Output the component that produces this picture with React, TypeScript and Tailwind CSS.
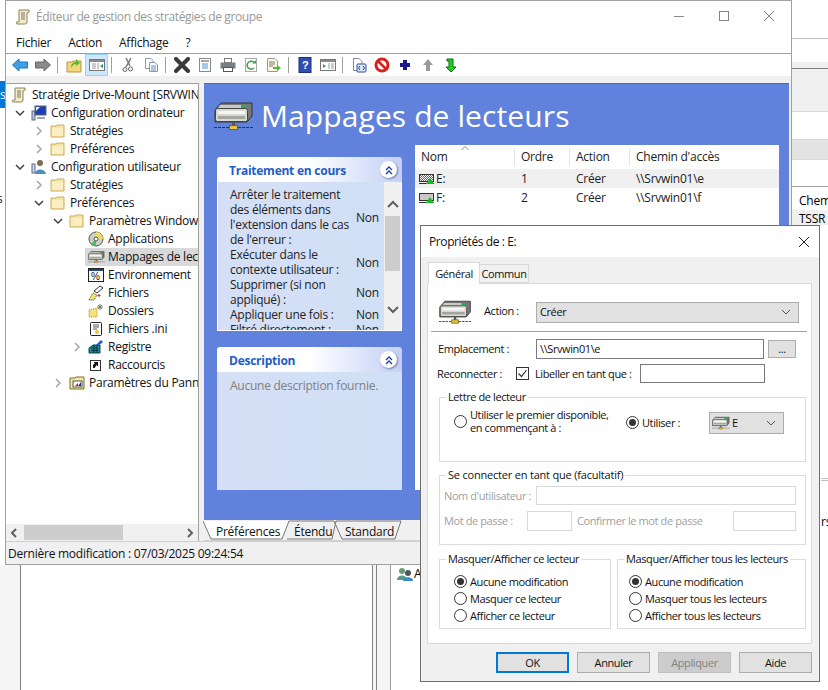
import type { ReactNode } from 'react'

const base = "font-['Open_Sans',sans-serif] text-[12px] tracking-[-0.25px] leading-[18px]"
const dialogBase = "font-['Open_Sans',sans-serif] text-[11px] tracking-[-0.4px] leading-[18px]"

function DriveIcon({ className = 'w-4 h-4' }: { className?: string }) {
  return (
    <svg viewBox="0 0 40 28" className={className}>
      <path d="M1 8 L7 1 H38 V14 L33 20 H1 Z" fill="#777" stroke="#333" />
      <path d="M6 3 H32 L29 6 H4 Z" fill="#c8c8c4" />
      <rect x="1.500" y="6.500" width="32" height="13" rx="2" fill="#d8d8d2" stroke="#444" />
      <rect x="4" y="9" width="27" height="3" fill="#f6f6f6" />
      <rect x="4" y="14" width="27" height="3" fill="#a5a5a0" />
      <rect x="27" y="3" width="5" height="3" fill="#18b848" />
      <rect x="18" y="20" width="3" height="4" fill="#555" />
      <rect x="15.500" y="23.500" width="8" height="4" fill="#e8c53f" stroke="#7a6310" />
      <path d="M0 25.500 H15 M24 25.500 H40" stroke="#333" strokeDasharray="3 1" />
    </svg>
  )
}

function Folder() {
  return (
    <svg viewBox="0 0 16 16" className="h-4 w-4 shrink-0">
      <path d="M1 3 H6 L7 2 H14 V14 H1 Z" fill="#f7e3a1" stroke="#cfae5c" />
      <path d="M2 5 H13 V13 H2 Z" fill="#fbeec2" />
    </svg>
  )
}

function Scroll() {
  return (
    <svg viewBox="0 0 16 16" className="h-4 w-4 shrink-0">
      <path d="M4 1 H14 V3 L12 4 V13 C12 15 10 15 9 15 H2 C1 15 1 13 2 13 H4 Z" fill="#f5ecc8" stroke="#8c8156" />
      <path d="M6 4 H10 M6 6 H10 M6 8 H10 M6 10 H10" stroke="#777" />
    </svg>
  )
}

function Monitor() {
  return (
    <svg viewBox="0 0 16 16" className="h-4 w-4 shrink-0">
      <rect x="1" y="6" width="3" height="9" fill="#b8c4d8" stroke="#5a6a8a" />
      <rect x="4" y="1" width="11" height="9" fill="#1c3fb8" stroke="#666" />
      <path d="M5 2 H9 L5 6 Z" fill="#e8f0ff" />
      <path d="M6 12 H14 V14 H6 Z" fill="#9aa4b4" />
    </svg>
  )
}

function UserIcon() {
  return (
    <svg viewBox="0 0 16 16" className="h-4 w-4 shrink-0">
      <rect x="1" y="5" width="3" height="9" fill="#cfd8e8" stroke="#5a6a8a" />
      <circle cx="9" cy="4" r="3" fill="#7b6a55" />
      <path d="M4 15 C4 9 14 9 15 15 Z" fill="#4b8fb8" />
    </svg>
  )
}

function CdIcon() {
  return (
    <svg viewBox="0 0 16 16" className="h-4 w-4 shrink-0">
      <circle cx="8" cy="8" r="7" fill="#c9d2c4" stroke="#555" />
      <path d="M8 8 L8 1 A7 7 0 0 1 15 8 Z" fill="#e8df6a" />
      <path d="M8 8 L3 13 A7 7 0 0 0 8 15 Z" fill="#55b85a" />
      <circle cx="8" cy="8" r="2" fill="#fff" stroke="#555" />
    </svg>
  )
}

function EnvIcon() {
  return (
    <svg viewBox="0 0 16 16" className="h-4 w-4 shrink-0">
      <rect x="0.500" y="1.500" width="15" height="13" fill="#fff" stroke="#222" />
      <rect x="1" y="2" width="14" height="2" fill="#1f3f8f" />
      <text x="3" y="13" fontSize="10" fontFamily="Liberation Sans" fill="#111">%</text>
    </svg>
  )
}

function FilesIcon() {
  return (
    <svg viewBox="0 0 16 16" className="h-4 w-4 shrink-0">
      <path d="M1 15 L5 8 L9 10 L6 15 Z" fill="#f3ea6b" stroke="#333" strokeDasharray="1 1" />
      <path d="M6 6 L12 1 L15 3 L9 8 Z" fill="#fff" stroke="#333" />
      <path d="M11 9 V12 M9.500 10.500 H12.500" stroke="#d22" />
    </svg>
  )
}

function NewFolder() {
  return (
    <svg viewBox="0 0 16 16" className="h-4 w-4 shrink-0">
      <path d="M1 7 L9 5 V14 H1 Z" fill="#f3e27a" stroke="#a58b2a" strokeDasharray="1 1" />
      <path d="M12 1 V7 M9 4 H15 M10 2 L14 6 M14 2 L10 6" stroke="#777" />
    </svg>
  )
}

function IniIcon() {
  return (
    <svg viewBox="0 0 16 16" className="h-4 w-4 shrink-0">
      <rect x="2.500" y="1.500" width="11" height="13" rx="1" fill="#fff" stroke="#222" />
      <path d="M5 4 H11 M5 6 H11 M5 8 H9" stroke="#555" />
      <circle cx="9" cy="11" r="2" fill="#e2c53b" />
    </svg>
  )
}

function RegistryIcon() {
  return (
    <svg viewBox="0 0 16 16" className="h-4 w-4 shrink-0">
      <path d="M1 9 L5 6 H12 V14 H1 Z" fill="#1d8f8f" stroke="#103f4f" />
      <path d="M3 9 H10 M3 11.500 H10 M6 6 V14 M9 6 V14" stroke="#0b2f3f" />
      <path d="M8 6 L13 1 L15 3 L10 7 Z" fill="#1f55c8" />
    </svg>
  )
}

function ShortcutIcon() {
  return (
    <svg viewBox="0 0 16 16" className="h-4 w-4 shrink-0">
      <rect x="2.500" y="3.500" width="10" height="10" fill="#fff" stroke="#333" />
      <path d="M5 11 V8 L7 6 H6 V5 H10 V9 H9 V7.500 L6.500 11 Z" fill="#111" />
    </svg>
  )
}

function PanelIcon() {
  return (
    <svg viewBox="0 0 16 16" className="h-4 w-4 shrink-0">
      <path d="M1 3 H6 L7 2 H15 V14 H1 Z" fill="#f3e9a8" stroke="#7a6a2a" />
      <rect x="4" y="6" width="9" height="6" fill="#fff" stroke="#555" />
      <path d="M6 11 L9 8 V11 Z" fill="#c22" />
      <path d="M9 11 L12 7 V11 Z" fill="#238" />
    </svg>
  )
}

function Chevron({ open }: { open?: boolean }) {
  return (
    <svg viewBox="0 0 10 10" className="h-[10px] w-[10px] shrink-0">
      {open ? (
        <path d="M1 3 L5 7 L9 3" fill="none" stroke="#404040" strokeWidth="1.500" />
      ) : (
        <path d="M3 1 L7 5 L3 9" fill="none" stroke="#a6a6a6" strokeWidth="1.500" />
      )}
    </svg>
  )
}

type TreeRowProps = {
  pad: string
  icon: ReactNode
  label: string
  chevron?: 'open' | 'closed'
  selected?: boolean
}

function TreeRow({ pad, icon, label, chevron, selected }: TreeRowProps) {
  return (
    <div className={`flex h-[18px] items-center whitespace-nowrap ${pad}`}>
      <div className="flex w-[16px] shrink-0 items-center">
        {chevron && <Chevron open={chevron === 'open'} />}
      </div>
      <div className={`flex h-[18px] flex-1 items-center ${selected ? '-ml-[3px] bg-[#d9d9d9] pl-[3px]' : ''}`}>
        <div className="flex w-[16px] shrink-0 justify-center">{icon}</div>
        <span className="pl-[4px]">{label}</span>
      </div>
    </div>
  )
}

function Tree() {
  return (
    <div className="flex-1 overflow-hidden pt-[1px] text-[#111]">
      <div className="flex h-[19px] items-center whitespace-nowrap pl-[5px]">
        <Scroll />
        <span className="pl-[5px]">Stratégie Drive-Mount [SRVWIN01]</span>
      </div>
      <TreeRow pad="pl-[9px]" chevron="open" icon={<Monitor />} label="Configuration ordinateur" />
      <TreeRow pad="pl-[28px]" chevron="closed" icon={<Folder />} label="Stratégies" />
      <TreeRow pad="pl-[28px]" chevron="closed" icon={<Folder />} label="Préférences" />
      <TreeRow pad="pl-[9px]" chevron="open" icon={<UserIcon />} label="Configuration utilisateur" />
      <TreeRow pad="pl-[28px]" chevron="closed" icon={<Folder />} label="Stratégies" />
      <TreeRow pad="pl-[28px]" chevron="open" icon={<Folder />} label="Préférences" />
      <TreeRow pad="pl-[47px]" chevron="open" icon={<Folder />} label="Paramètres Windows" />
      <TreeRow pad="pl-[66px]" icon={<CdIcon />} label="Applications" />
      <TreeRow pad="pl-[66px]" icon={<DriveIcon className="h-[14px] w-[17px] shrink-0" />} label="Mappages de lecteurs" selected />
      <TreeRow pad="pl-[66px]" icon={<EnvIcon />} label="Environnement" />
      <TreeRow pad="pl-[66px]" icon={<FilesIcon />} label="Fichiers" />
      <TreeRow pad="pl-[66px]" icon={<NewFolder />} label="Dossiers" />
      <TreeRow pad="pl-[66px]" icon={<IniIcon />} label="Fichiers .ini" />
      <TreeRow pad="pl-[66px]" chevron="closed" icon={<RegistryIcon />} label="Registre" />
      <TreeRow pad="pl-[66px]" icon={<ShortcutIcon />} label="Raccourcis" />
      <TreeRow pad="pl-[47px]" chevron="closed" icon={<PanelIcon />} label="Paramètres du Panneau" />
    </div>
  )
}

function Tool({ children, active }: { children: ReactNode; active?: boolean }) {
  return (
    <div className={`flex h-[22px] w-[23px] shrink-0 items-center justify-center ${active ? 'border border-[#99d1ff] bg-[#cce8ff]' : ''}`}>
      {children}
    </div>
  )
}

function Sep() {
  return <div className="ml-[3px] mr-[4px] h-[16px] w-px shrink-0 bg-[#a0a0a0]" />
}

function Svg({ children }: { children: ReactNode }) {
  return <svg viewBox="0 0 16 16" className="h-4 w-4">{children}</svg>
}

function Toolbar() {
  return (
    <div className="flex h-[22px] items-center pl-[2px]">
      <Tool><Svg><path d="M0.500 8 L7 2 V5 H15.500 V11 H7 V14 Z" fill="#3fa0e8" stroke="#1f6fb8" /></Svg></Tool>
      <Tool><Svg><path d="M15.500 8 L9 2 V5 H0.500 V11 H9 V14 Z" fill="#8a8a8a" stroke="#666" /></Svg></Tool>
      <Sep />
      <Tool>
        <Svg>
          <path d="M1 5 H6 L7 4 H15 V15 H1 Z" fill="#f2d77c" stroke="#b8963a" />
          <path d="M5 11 C5 7 7 5 10 5 V2 L14 6 L10 9 V7 C8 7 7 8 5 11 Z" fill="#5cb82e" />
        </Svg>
      </Tool>
      <Tool active>
        <Svg>
          <rect x="0.500" y="2.500" width="15" height="11" fill="#fff" stroke="#777" />
          <rect x="1" y="3" width="14" height="2" fill="#8a8a8a" />
          <path d="M9 6 V12 M3 7 H7 M3 9 H7 M3 11 H7" stroke="#999" />
          <path d="M14 7 L11 9 L14 11 Z" fill="#2a9a6a" />
        </Svg>
      </Tool>
      <Sep />
      <Tool>
        <Svg>
          <path d="M11 1 L6 10 M6 1 L10 9" stroke="#777" strokeWidth="1.500" />
          <circle cx="5" cy="12.500" r="2" fill="none" stroke="#666" />
          <circle cx="10.500" cy="12" r="2" fill="none" stroke="#666" />
        </Svg>
      </Tool>
      <Tool>
        <Svg>
          <path d="M2.500 1.500 H8 L10 3.500 V11.500 H2.500 Z" fill="#fff" stroke="#8a97a8" />
          <path d="M6.500 5.500 H12 L14.500 8 V14.500 H6.500 Z" fill="#fff" stroke="#8a97a8" />
          <path d="M8 9 H13 M8 11 H13 M8 13 H13" stroke="#5a8fc8" />
        </Svg>
      </Tool>
      <Sep />
      <Tool><Svg><path d="M2 2 L14 14 M14 2 L2 14" stroke="#3a3a3a" strokeWidth="4" strokeLinecap="round" /></Svg></Tool>
      <Tool>
        <Svg>
          <rect x="2.500" y="1.500" width="11" height="13" fill="#fff" stroke="#8a8a8a" />
          <path d="M4 4 H12" stroke="#8a8a8a" strokeWidth="1.500" />
          <path d="M5 7 H11 M5 9 H11 M5 11 H11" stroke="#4a8fd8" />
        </Svg>
      </Tool>
      <Tool>
        <Svg>
          <rect x="4.500" y="1.500" width="7" height="4" fill="#fff" stroke="#777" />
          <rect x="0.500" y="5.500" width="15" height="6" fill="#7a8088" />
          <rect x="3.500" y="10.500" width="9" height="4" fill="#fff" stroke="#555" />
        </Svg>
      </Tool>
      <Tool>
        <Svg>
          <rect x="2.500" y="1.500" width="11" height="13" fill="#fff" stroke="#aaa" />
          <path d="M11.500 6 A4 4 0 1 0 11 11" fill="none" stroke="#3f9f3f" strokeWidth="1.500" />
          <path d="M9.500 6.500 H13 V3 Z" fill="#3f9f3f" />
        </Svg>
      </Tool>
      <Tool>
        <Svg>
          <path d="M1.500 1.500 H9 L11.500 4 V14.500 H1.500 Z" fill="#fdf8e0" stroke="#999" />
          <path d="M3 5 H9 M3 7 H9 M3 9 H7" stroke="#777" />
          <path d="M7 10 H11 V8 L15 11 L11 14 V12 H7 Z" fill="#4fb83f" />
        </Svg>
      </Tool>
      <Sep />
      <Tool>
        <Svg>
          <rect x="2" y="0.500" width="12" height="15" fill="#2f4fb0" stroke="#1f2f7f" />
          <text x="5" y="12" fontSize="11" fontWeight="bold" fontFamily="Liberation Sans" fill="#fff">?</text>
        </Svg>
      </Tool>
      <Tool>
        <Svg>
          <rect x="0.500" y="2.500" width="15" height="11" fill="#fff" stroke="#777" />
          <rect x="1" y="3" width="14" height="2" fill="#8a8a8a" />
          <path d="M9 6 V12 M11 7 H14 M11 9 H14 M11 11 H14" stroke="#999" />
          <path d="M3 7 L6 9 L3 11 Z" fill="#2a9a6a" />
        </Svg>
      </Tool>
      <Sep />
      <Tool>
        <Svg>
          <path d="M2.500 1.500 H8 L11 4.500 V13.500 H2.500 Z" fill="#fff" stroke="#7a8aa8" />
          <rect x="6" y="7" width="9" height="8" rx="1" fill="#dfe8f8" stroke="#2a4f9f" />
          <path d="M9 9 L7.500 11 L9 13 M12 9 L13.500 11 L12 13" fill="none" stroke="#1f3f8f" />
        </Svg>
      </Tool>
      <Tool>
        <Svg>
          <circle cx="8" cy="8" r="6" fill="#fff" stroke="#d8201f" strokeWidth="3" />
          <path d="M4 4 L12 12" stroke="#d8201f" strokeWidth="2.500" />
        </Svg>
      </Tool>
      <Tool><Svg><path d="M6 3 H10 V6 H13 V10 H10 V13 H6 V10 H3 V6 H6 Z" fill="#1a1a8c" /></Svg></Tool>
      <Tool><Svg><path d="M8 2 L13 8 H10 V14 H6 V8 H3 Z" fill="#9a9a9a" /></Svg></Tool>
      <Tool>
        <Svg>
          <path d="M4 2 H10 V10 H13 L8 15 L3 10 H6 V4 H4 Z" fill="#22d022" stroke="#0a6a0a" />
        </Svg>
      </Tool>
    </div>
  )
}

function CollapseBtn() {
  return (
    <div className="flex h-[17px] w-[17px] items-center justify-center rounded-full bg-white shadow-[1px_1px_2px_rgba(60,70,120,0.6)]">
      <svg viewBox="0 0 10 10" className="h-[10px] w-[10px]">
        <path d="M2 5 L5 2 L8 5 M2 9 L5 6 L8 9" fill="none" stroke="#1c3fa8" strokeWidth="1.300" />
      </svg>
    </div>
  )
}

function TaskHeader({ title }: { title: string }) {
  return (
    <div className="flex h-[25px] shrink-0 items-center justify-between rounded-t-[3px] bg-gradient-to-r from-white via-white to-[#c3d0f5] pl-[12px] pr-[5px]">
      <span className="pt-[2px] font-bold text-[#215dc6]">{title}</span>
      <CollapseBtn />
    </div>
  )
}

const processing: [string, string][] = [
  ["Arrêter le traitement des éléments dans l'extension dans le cas de l'erreur :", 'Non'],
  ['Exécuter dans le contexte utilisateur :', 'Non'],
  ['Supprimer (si non appliqué) :', 'Non'],
  ['Appliquer une fois :', 'Non'],
  ['Filtré directement :', 'Non'],
]

function TreatmentCard() {
  return (
    <div className="flex h-[174px] shrink-0 flex-col">
      <TaskHeader title="Traitement en cours" />
      <div className="flex min-h-0 flex-1 border-x border-b border-white">
        <div className="flex-1 overflow-hidden bg-gradient-to-r from-[#d6dff7] to-[#d0e0f5] pl-[12px] pt-[5px] text-[#222] leading-[15px]">
          {processing.map(([label, value]) => (
            <div key={label} className="flex items-center">
              <span className="w-[120px] shrink-0">{label}</span>
              <span className="pl-[6px]">{value}</span>
            </div>
          ))}
        </div>
        <div className="flex w-[17px] shrink-0 flex-col items-center bg-[#f0f0f0] pt-[18px]">
          <svg viewBox="0 0 12 8" className="h-[8px] w-[12px] shrink-0">
            <path d="M1 7 L6 2 L11 7" fill="none" stroke="#606060" strokeWidth="2" />
          </svg>
          <div className="mt-[8px] h-[55px] w-[15px] shrink-0 bg-[#cdcdcd]" />
          <svg viewBox="0 0 12 8" className="mt-[35px] h-[8px] w-[12px] shrink-0">
            <path d="M1 1 L6 6 L11 1" fill="none" stroke="#606060" strokeWidth="2" />
          </svg>
        </div>
      </div>
    </div>
  )
}

function DescriptionCard() {
  return (
    <div className="flex h-[143px] shrink-0 flex-col">
      <TaskHeader title="Description" />
      <div className="flex-1 bg-gradient-to-r from-[#d6dff7] to-[#d0e0f5] pl-[13px] pt-[5px] text-[#808080]">
        Aucune description fournie.
      </div>
    </div>
  )
}

function TableRow({ name, order, path, active }: { name: string; order: string; path: string; active?: boolean }) {
  const pid = `dither-${name[0]}`
  return (
    <div className={`flex h-[19px] items-center ${active ? 'bg-[#f0f0f0]' : ''}`}>
      <div className="flex w-[99px] items-center pl-[4px]">
        <svg viewBox="0 0 16 12" className="h-[12px] w-[16px]">
          <defs>
            <pattern id={pid} width="2" height="2" patternUnits="userSpaceOnUse">
              <rect width="2" height="2" fill="#2b6fd0" />
              <rect width="1" height="1" fill="#ffffff" />
              <rect x="1" y="1" width="1" height="1" fill="#ffffff" />
            </pattern>
          </defs>
          <rect x="0.500" y="1.500" width="14" height="7" fill={active ? `url(#${pid})` : '#c8c8c8'} stroke="#333" />
          <path d="M0 10.500 H15" stroke="#333" />
          <path d="M11 5 L15 11 H7 Z" fill="#10c020" />
        </svg>
        <span className="pl-[1px]">{name}</span>
      </div>
      <span className="w-[55px] pl-[7px]">{order}</span>
      <span className="w-[60px] pl-[7px]">Créer</span>
      <span className="pl-[7px]">{path}</span>
    </div>
  )
}

function DrivesTable() {
  return (
    <div className="relative w-[364px] shrink-0 bg-white text-[#222]">
      <svg viewBox="0 0 8 4" className="absolute left-[46px] top-[1px] h-[4px] w-[8px]">
        <path d="M0.500 4 L4 0.500 L7.500 4" fill="none" stroke="#888" />
      </svg>
      <div className="flex h-[24px] items-center">
        <span className="w-[100px] border-r border-[#e5e5e5] pl-[6px]">Nom</span>
        <span className="w-[55px] border-r border-[#e5e5e5] pl-[6px]">Ordre</span>
        <span className="w-[60px] border-r border-[#e5e5e5] pl-[6px]">Action</span>
        <span className="pl-[6px]">Chemin d'accès</span>
      </div>
      <TableRow name="E:" order="1" path="\\Srvwin01\e" active />
      <TableRow name="F:" order="2" path="\\Srvwin01\f" />
    </div>
  )
}

function BottomTabs() {
  return (
    <div className="relative flex h-[21px] items-center border-b border-[#d0d0d0] bg-[#f0f0f0] pt-[3px] text-[#111]">
      <svg viewBox="0 0 203 21" className="absolute -left-[1px] top-0 h-[21px] w-[203px]">
        <path d="M0 1 L8 19 H79 L86 1 Z" fill="#fff" />
        <path d="M0 1 L8 19 H79 L86 1 H131" fill="none" stroke="#777" />
        <path d="M84 19 H129 L133 1 H198 L192 19 H139 L131 1" fill="none" stroke="#777" />
      </svg>
      <span className="relative ml-[12px] w-[78px]">Préférences</span>
      <span className="relative w-[51px]">Étendu</span>
      <span className="relative">Standard</span>
    </div>
  )
}

function MainWindow() {
  return (
    <div className={`absolute left-[5px] top-0 flex h-[565px] w-[787px] flex-col border border-[#a0a0a0] bg-white ${base}`}>
      <div className="flex h-[31px] shrink-0 items-center pl-[9px]">
        <Scroll />
        <span className="pl-[5px] tracking-[-0.38px] text-[#999]">Éditeur de gestion des stratégies de groupe</span>
        <div className="ml-auto flex items-center gap-[35px] pb-[1px] pr-[17px]">
          <svg viewBox="0 0 10 10" className="h-[10px] w-[10px]"><path d="M0 5.500 H10" stroke="#888" /></svg>
          <svg viewBox="0 0 10 10" className="h-[10px] w-[10px]"><rect x="0.500" y="0.500" width="9" height="9" fill="none" stroke="#888" /></svg>
          <svg viewBox="0 0 10 10" className="h-[10px] w-[10px]"><path d="M0 0 L10 10 M10 0 L0 10" stroke="#888" /></svg>
        </div>
      </div>
      <div className="flex h-[22px] shrink-0 items-center gap-[17px] border-b border-[#a0a0a0] pl-[10px] text-[#111]">
        <span>Fichier</span>
        <span>Action</span>
        <span>Affichage</span>
        <span>?</span>
      </div>
      <Toolbar />
      <div className="h-[7px] shrink-0 bg-[#f0f0f0]" />
      <div className="flex min-h-0 flex-1">
        <div className="flex w-[193px] shrink-0 flex-col border-r border-t border-[#a0a0a0]">
          <Tree />
          <div className="flex h-[17px] shrink-0 items-center bg-[#f0f0f0] px-[4px]">
            <svg viewBox="0 0 8 10" className="h-[10px] w-[8px]"><path d="M6 1 L2 5 L6 9" fill="none" stroke="#606060" strokeWidth="2" /></svg>
            <div className="ml-[6px] h-[15px] w-[99px] bg-[#cdcdcd]" />
            <svg viewBox="0 0 8 10" className="ml-auto h-[10px] w-[8px]"><path d="M2 1 L6 5 L2 9" fill="none" stroke="#606060" strokeWidth="2" /></svg>
          </div>
        </div>
        <div className="flex min-w-0 flex-1 flex-col bg-[#f0f0f0] pl-[5px] pr-[2px]">
          <div className="flex-1 border-t border-[#696969] bg-[#6082dc] pl-[10px]">
            <div className="flex h-[61px] items-center gap-[7px] pt-[3px]">
              <DriveIcon className="h-[28px] w-[40px]" />
              <span className="text-[30px] leading-[36px] tracking-[0.1px] text-white">Mappages de lecteurs</span>
            </div>
            <div className="flex gap-[13px] pl-[3px]">
              <div className="flex w-[185px] shrink-0 flex-col gap-[16px] pt-[12px]">
                <TreatmentCard />
                <DescriptionCard />
              </div>
              <DrivesTable />
            </div>
          </div>
          <BottomTabs />
        </div>
      </div>
      <div className="flex h-[23px] shrink-0 items-center border-t border-[#d0d0d0] bg-[#f0f0f0] pl-[2px] pt-[1px] text-[#111]">
        Dernière modification : 07/03/2025 09:24:54
      </div>
    </div>
  )
}

function Radio({ checked, label }: { checked?: boolean; label: ReactNode }) {
  return (
    <div className="flex items-center gap-[3px]">
      <div className="flex h-[13px] w-[13px] shrink-0 items-center justify-center rounded-full border border-[#333] bg-white">
        {checked && <div className="h-[7px] w-[7px] rounded-full bg-[#333]" />}
      </div>
      <span className="leading-[13px] whitespace-nowrap">{label}</span>
    </div>
  )
}

function Group({ title, className, children }: { title: string; className: string; children: ReactNode }) {
  return (
    <fieldset className={`shrink-0 border border-[#dcdcdc] ${className}`}>
      <legend className="ml-[6px] px-[2px] leading-[12px] whitespace-nowrap">{title}</legend>
      {children}
    </fieldset>
  )
}

function DialogButton({ label, variant }: { label: string; variant?: 'default' | 'disabled' }) {
  const style =
    variant === 'default'
      ? 'border-2 border-[#0078d7] bg-[#e1e1e1] text-[#111]'
      : variant === 'disabled'
        ? 'border border-[#bfbfbf] bg-[#cccccc] text-[#838383]'
        : 'border border-[#adadad] bg-[#e1e1e1] text-[#111]'
  return <div className={`flex h-[21px] w-[73px] items-center justify-center ${style}`}>{label}</div>
}

function Dialog() {
  return (
    <div className={`absolute left-[420px] top-[225px] flex h-[457px] w-[400px] flex-col border border-[#6e6e6e] bg-[#f0f0f0] text-[#111] ${dialogBase}`}>
      <div className="flex h-[31px] shrink-0 items-center justify-between bg-white pl-[8px] pr-[10px]">
        <span className="text-[12px]">Propriétés de : E:</span>
        <svg viewBox="0 0 10 10" className="h-[10px] w-[10px]"><path d="M0 0 L10 10 M10 0 L0 10" stroke="#222" /></svg>
      </div>
      <div className="flex h-[26px] shrink-0 items-end pl-[7px]">
        <div className="relative z-10 -mb-px flex h-[22px] w-[52px] items-center justify-center border border-b-0 border-[#d9d9d9] bg-white">Général</div>
        <div className="flex h-[19px] w-[49px] items-center justify-center border border-l-0 border-[#d9d9d9]">Commun</div>
      </div>
      <div className="ml-[6px] flex h-[361px] w-[385px] shrink-0 flex-col border border-[#d9d9d9] bg-white pt-[12px]">
        <div className="flex h-[32px] shrink-0 items-center pl-[11px]">
          <DriveIcon className="h-[24px] w-[33px] shrink-0" />
          <span className="w-[64px] shrink-0 pb-[3px] pl-[12px]">Action :</span>
          <div className="flex h-[21px] w-[263px] items-center justify-between border border-[#adadad] bg-[#e1e1e1] pl-[3px] pr-[7px]">
            Créer
            <svg viewBox="0 0 10 6" className="h-[6px] w-[10px]"><path d="M1 1 L5 5 L9 1" fill="none" stroke="#555" /></svg>
          </div>
        </div>
        <div className="ml-[3px] mr-[4px] mt-[3px] h-px shrink-0 bg-[#a0a0a0]" />
        <div className="mt-[7px] flex h-[20px] shrink-0 items-center pl-[10px]">
          <span className="w-[98px] shrink-0">Emplacement :</span>
          <div className="flex h-[20px] w-[228px] items-center border border-[#7a7a7a] pl-[3px]">\\Srvwin01\e</div>
          <div className="ml-[4px] flex h-[18px] w-[28px] items-center justify-center border border-[#adadad] bg-[#e1e1e1]">...</div>
        </div>
        <div className="mt-[5px] flex h-[19px] shrink-0 items-center pl-[9px]">
          <span className="w-[79px] shrink-0">Reconnecter :</span>
          <div className="flex h-[13px] w-[13px] shrink-0 items-center justify-center border border-[#333]">
            <svg viewBox="0 0 11 11" className="h-[11px] w-[11px]"><path d="M1.500 5.500 L4.500 8.500 L9.500 2" fill="none" stroke="#333" strokeWidth="1.200" /></svg>
          </div>
          <span className="w-[111px] shrink-0 whitespace-nowrap pl-[6px]">Libeller en tant que :</span>
          <div className="h-[19px] w-[125px] shrink-0 border border-[#7a7a7a]" />
        </div>
        <Group title="Lettre de lecteur" className="ml-[11px] mr-[5px] mt-[8px] h-[71px]">
          <div className="flex items-center pl-[14px] pt-[5px]">
            <div className="w-[172px] shrink-0">
              <Radio label={<>Utiliser le premier disponible,<br />en commençant à :</>} />
            </div>
            <div className="w-[83px] shrink-0 pt-[3px]">
              <Radio checked label="Utiliser :" />
            </div>
            <div className="mt-[4px] flex h-[22px] w-[75px] shrink-0 items-center border border-[#adadad] bg-[#e1e1e1] pl-[2px] pr-[7px]">
              <DriveIcon className="h-[14px] w-[18px] shrink-0" />
              <span className="pl-[2px]">E</span>
              <svg viewBox="0 0 10 6" className="ml-auto h-[6px] w-[10px]"><path d="M1 1 L5 5 L9 1" fill="none" stroke="#555" /></svg>
            </div>
          </div>
        </Group>
        <Group title="Se connecter en tant que (facultatif)" className="ml-[11px] mr-[5px] mt-[7px] h-[76px] tracking-[-0.2px]">
          <div className="flex items-center pl-[4px] pt-[5px] tracking-[-0.4px] text-[#a0a0a0]">
            <span className="w-[92px] shrink-0 whitespace-nowrap">Nom d'utilisateur :</span>
            <div className="h-[19px] w-[260px] shrink-0 border border-[#d9d9d9]" />
          </div>
          <div className="flex items-center pl-[4px] pt-[6px] tracking-[-0.4px] text-[#a0a0a0]">
            <span className="w-[83px] shrink-0 whitespace-nowrap">Mot de passe :</span>
            <div className="h-[20px] w-[45px] shrink-0 border border-[#d9d9d9]" />
            <span className="w-[161px] shrink-0 whitespace-nowrap pl-[5px]">Confirmer le mot de passe</span>
            <div className="h-[20px] w-[63px] shrink-0 border border-[#d9d9d9]" />
          </div>
        </Group>
        <div className="ml-[11px] mr-[5px] mt-[8px] flex shrink-0 gap-[6px]">
          <Group title="Masquer/Afficher ce lecteur" className="h-[76px] w-[172px]">
            <div className="flex flex-col gap-[4px] pl-[14px] pt-[10px]">
              <Radio checked label="Aucune modification" />
              <Radio label="Masquer ce lecteur" />
              <Radio label="Afficher ce lecteur" />
            </div>
          </Group>
          <Group title="Masquer/Afficher tous les lecteurs" className="h-[76px] w-[189px]">
            <div className="flex flex-col gap-[4px] pl-[11px] pt-[10px]">
              <Radio checked label="Aucune modification" />
              <Radio label="Masquer tous les lecteurs" />
              <Radio label="Afficher tous les lecteurs" />
            </div>
          </Group>
        </div>
      </div>
      <div className="flex justify-end gap-[8px] pr-[7px] pt-[8px]">
        <DialogButton label="OK" variant="default" />
        <DialogButton label="Annuler" />
        <DialogButton label="Appliquer" variant="disabled" />
        <DialogButton label="Aide" />
      </div>
    </div>
  )
}

function Backdrop() {
  return (
    <>
      <div className={`absolute left-0 top-[81px] flex h-[27px] w-[5px] items-center overflow-hidden bg-[#0078d7] text-white ${base}`}>s</div>
      <div className={`absolute left-[-3px] top-[190px] text-[#222] ${base}`}>s</div>
      <div className="absolute left-0 top-[565px] h-[125px] w-[20px] bg-[#f5f5f5]" />
      <div className="absolute left-[20px] top-[565px] h-[125px] w-[353px] border-x border-[#808080] bg-white" />
      <div className="absolute left-[373px] top-[565px] h-[125px] w-[17px] bg-[#f5f5f5]" />
      <div className="absolute left-[376px] top-[565px] h-[125px] w-px bg-[#808080]" />
      <div className="absolute left-[390px] top-[565px] h-[125px] w-px bg-[#a0a0a0]" />
      <div className={`absolute left-[397px] top-[565px] flex h-[18px] items-center gap-[1px] ${base}`}>
        <svg viewBox="0 0 16 14" className="h-[14px] w-[16px]">
          <circle cx="5" cy="4" r="3" fill="#6a9a7a" />
          <path d="M0 13 C0 7 10 7 10 13 Z" fill="#5a9a8a" />
          <circle cx="11" cy="6" r="3" fill="#555" />
          <path d="M6 14 C6 9 16 9 16 14 Z" fill="#3a8ac8" />
        </svg>
        <span className="w-[6px] overflow-hidden">A</span>
      </div>
      {/* fenetre derriere, a droite */}
      <div className="absolute left-[792px] top-[38px] h-px w-[36px] bg-[#c0c0c0]" />
      <div className="absolute left-[792px] top-[62px] h-[6px] w-[36px] bg-[#f0f0f0]" />
      <div className="absolute left-[792px] top-[68px] h-[44px] w-[36px] border-t border-b border-t-[#808080] border-b-[#d9d9d9] bg-[#f0f0f0]" />
      <div className="absolute left-[792px] top-[139px] h-[21px] w-[36px] border-y border-[#d9d9d9] bg-[#e3e3e3]" />
      <div className={`absolute left-[792px] top-[186px] h-[39px] w-[36px] overflow-hidden border-t border-[#a0a0a0] pl-[7px] pt-[5px] ${base}`}>
        <div className="whitespace-nowrap">Chemin</div>
        <div className="-ml-[7px] whitespace-nowrap bg-[#f0f0f0] pl-[7px]">TSSR</div>
      </div>
      <div className="absolute left-[821px] top-[478px] h-[3px] w-[7px] border-y border-[#c0c0c0]" />
      <div className={`absolute left-[821px] top-[513px] w-[7px] overflow-hidden ${base}`}>rs</div>
    </>
  )
}

export default function App() {
  return (
    <div className="relative h-[690px] w-[828px] overflow-hidden bg-white">
      <Backdrop />
      <MainWindow />
      <Dialog />
    </div>
  )
}
